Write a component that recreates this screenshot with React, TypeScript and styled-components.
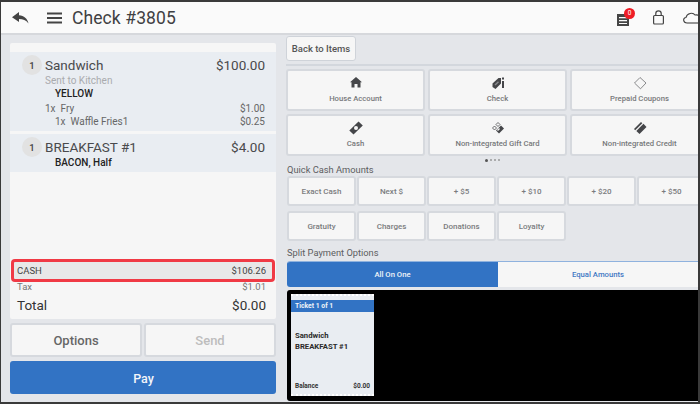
import React from "react";
import styled, { createGlobalStyle } from "styled-components";

const Global = createGlobalStyle`
  html, body { margin: 0; padding: 0; background: #fff; }
  * { box-sizing: border-box; }
  body { font-family: Roboto, "Liberation Sans", sans-serif; }
`;

const Frame = styled.div`
  width: 700px; height: 404px; overflow: hidden;
  border: 2px solid #3a3a3a; border-left-width: 1px;
  background: #e4e6ea; display: flex; flex-direction: column;
`;
const Header = styled.header`
  height: 33px; flex: none; background: #fafafa; border-bottom: 2px solid #d6d8dc;
  display: flex; align-items: center; padding-left: 10px; color: #444;
`;
const HeaderIcon = styled.svg<{ $ml?: number }>`
  flex: none; margin-left: ${p => p.$ml ?? 0}px; display: block;
`;
const Title = styled.h1`
  margin: 0 0 0 10px; font-size: 17.5px; font-weight: 400; color: #3f4042; letter-spacing: .1px;
`;
const HeaderRight = styled.div`
  margin-left: auto; margin-right: -3px; display: flex; align-items: center;
`;
const BadgeWrap = styled.div`
  position: relative; width: 12px; height: 12px; margin: 5px 23px 0 0;
`;
const Badge = styled.span`
  position: absolute; left: 7px; top: -6px; width: 11px; height: 11px; border-radius: 50%;
  background: #ee1c25; color: #fff; font-size: 6.5px; line-height: 11px; text-align: center;
`;
const Main = styled.main`
  flex: 1; display: flex; min-height: 0; padding: 8px 0 0 9px;
`;
const LeftCol = styled.section`
  width: 266px; flex: none; display: flex; flex-direction: column;
`;
const Ticket = styled.div`
  height: 276px; background: #f6f6f6; border-radius: 2px; padding-top: 9px; display: flex; flex-direction: column;
`;
const ItemCard = styled.div<{ $h: number }>`
  height: ${p => p.$h}px; background: #e9edf2; margin-bottom: 3px; padding: 4px 11px 0 12px;
  display: grid; grid-template-columns: 23px 1fr auto; align-content: start;
`;
const Qty = styled.span`
  width: 20px; height: 20px; margin: -1px 0; border-radius: 50%; background: #e2e2e2; color: #444;
  font-size: 9.5px; font-weight: 500; display: flex; align-items: center; justify-content: center;
`;
const ItemName = styled.span`
  font-size: 13.5px; color: #4a4a4c; line-height: 18px;
`;
const ItemPrice = styled.span`
  font-size: 13.5px; color: #4a4a4c; line-height: 18px; text-align: right;
`;
const SubLine = styled.div<{ $indent?: number; $color?: string; $w?: number; $mt?: number }>`
  grid-column: 2 / 4; display: flex; justify-content: space-between;
  padding-left: ${p => p.$indent ?? 0}px; margin-top: ${p => p.$mt ?? 0}px; font-size: 10px; line-height: 13px;
  color: ${p => p.$color ?? "#666"}; font-weight: ${p => p.$w ?? 400};
`;
const Spacer = styled.div` flex: 1; `;
const CashRow = styled.div`
  margin: 0 1px; height: 23px; background: #e8e8e8; border: 3px solid #f03a45; border-radius: 4px;
  display: flex; justify-content: space-between; align-items: center; padding: 0 6px 0 3px;
  font-size: 9.5px; color: #444;
`;
const TaxRow = styled.div`
  display: flex; justify-content: space-between; padding: 0 10px 0 7px; font-size: 9.5px;
  line-height: 12px; margin-top: -1px; color: #777;
`;
const TotalRow = styled.div`
  display: flex; justify-content: space-between; align-items: center; padding: 0 10px 0 7px;
  font-size: 13.5px; height: 24px; margin-bottom: 2px; color: #333;
`;
const ActionRow = styled.div`
  display: grid; grid-template-columns: 132px 132px; gap: 2px; margin-top: 4px;
`;
const ActionButton = styled.button<{ $muted?: boolean }>`
  height: 34px; background: #f6f6f6; border: 2px solid #d6d9de; border-radius: 3px;
  font: 500 13px Roboto, sans-serif; color: ${p => p.$muted ? "#bdbdbd" : "#666"}; padding: 0;
`;
const PayButton = styled.button`
  height: 33px; margin-top: 4px; background: #3273c4; border: 0; border-radius: 3px; color: #f4f6fa;
  font: 500 12.5px Roboto, sans-serif; padding: 1px 0 0 1px;
`;
const RightCol = styled.section`
  margin-left: 10px; margin-top: -7px; flex: 1; min-width: 0; overflow: hidden;
  display: flex; flex-direction: column; align-items: flex-start;
`;
const BackButton = styled.button`
  width: 70px; height: 25px; margin: 0; background: #f6f6f6; border: 1px solid #cfd3d9; border-radius: 3px;
  font: 500 9.5px Roboto, sans-serif; color: #555; padding: 0; flex: none;
`;
const Divider = styled.div`
  width: 100%; height: 2px; flex: none; background: #d3d7dd; margin-top: 3px;
`;
const TileGrid = styled.div`
  margin-top: 3px; display: grid; grid-template-columns: 139px 139px 139px; grid-auto-rows: 42px; gap: 3px;
  flex: none; width: 423px;
`;
const Tile = styled.button`
  background: #f6f6f6; border: 2px solid #d6d9de; border-radius: 3px; padding: 5px 0 0;
  display: flex; flex-direction: column; align-items: center; gap: 4px;
  font: 500 7.7px Roboto, sans-serif; color: #77787a;
`;
const Dots = styled.div`
  width: 412px; height: 8px; display: flex; justify-content: center; align-items: center; gap: 2px; flex: none;
`;
const Dot = styled.span<{ $on?: boolean }>`
  width: ${p => p.$on ? 3 : 2}px; height: ${p => p.$on ? 3 : 2}px; border-radius: 50%;
  background: ${p => p.$on ? "#555" : "#999"};
`;
const SectionLabel = styled.div<{ $mt?: number }>`
  font-size: 9.3px; line-height: 12px; color: #5c5d60; margin-top: ${p => p.$mt ?? 0}px; padding-left: 1px; flex: none;
`;
const QuickGrid = styled.div<{ $mt?: number }>`
  margin-top: ${p => p.$mt ?? 0}px; margin-left: 1px; display: grid; grid-template-columns: repeat(6, 69px);
  grid-auto-rows: 30px; gap: 1px; flex: none; width: 420px;
`;
const QuickButton = styled.button`
  background: #f6f6f6; border: 2px solid #d6d9de; border-radius: 3px; padding: 0;
  font: 500 8px Roboto, sans-serif; color: #7b7c7e;
`;
const Segment = styled.div`
  margin-top: 2px; margin-left: 1px; width: 411px; height: 26px; display: flex; flex: none;
  border-top: 1px solid #8fb2de; border-radius: 3px 0 0 3px; overflow: hidden;
`;
const SegmentOption = styled.div<{ $active?: boolean }>`
  width: ${p => p.$active ? 211 : 200}px; flex: none; display: flex; align-items: center; justify-content: center;
  font-size: 7.7px; font-weight: 500; background: ${p => p.$active ? "#3273c4" : "#f6f6f6"};
  color: ${p => p.$active ? "#f0f3f8" : "#3f78c4"};
`;
const Tray = styled.div`
  margin-top: 3px; margin-left: 1px; width: 411px; height: 111px; flex: none; background: #000;
  border-radius: 3px 0 0 3px; padding: 4px;
`;
const TicketCard = styled.div`
  width: 83px; height: 102px; background: #e9edf2; color: #222;
  border-top: 2px dotted #fff; border-bottom: 2px dotted #fff;
  display: flex; flex-direction: column; padding-top: 4px;
`;
const TicketHead = styled.div`
  height: 12px; background: #3273c4; color: #f0f3f8; font-size: 6.8px; font-weight: 700; line-height: 12px; padding-left: 4px;
`;
const TicketItems = styled.div`
  margin-top: 18px; padding-left: 4px; font-size: 7.7px; font-weight: 700; line-height: 11px; color: #2a2a2a;
`;
const TicketFoot = styled.div`
  margin-top: auto; margin-bottom: 4px; display: flex; justify-content: space-between; padding: 0 4px;
  font-size: 6.5px; font-weight: 700; color: #333;
`;

const ic = "#454649";
const icons: Record<string, React.ReactNode> = {
  house: <path d="M7 1 L1 6.2 L2.5 6.2 L2.5 11.5 L5.5 11.5 L5.5 8 L8.5 8 L8.5 11.5 L11.5 11.5 L11.5 6.2 L13 6.2 Z" fill={ic} />,
  check: <g fill={ic}><path d="M7.5 2 L1.5 7.5 L1.5 11 L4.5 13 L10 7.5 L10 2 Z" /><rect x="11" y="5" width="2" height="7" /><rect x="11" y="1.5" width="2" height="2" /><path d="M3.5 8.5 L7 5.2 L8 6.2 L4.5 9.5 Z" fill="#8a8b8e" /></g>,
  coupon: <path d="M7 1.5 L13 7 L7.5 12.8 L1.5 7 Z" fill="none" stroke="#6c6d70" strokeWidth=".8" />,
  cash: <g><path d="M9.5 0.5 L13.8 4.5 L4.5 13.5 L0.3 9.5 Z" fill={ic} /><circle cx="7" cy="7" r="2" fill="#f6f6f6" /></g>,
  gift: <g fill={ic}><path d="M7 1.5 L9 3.5 L7 5.5 L5 3.5 Z" fill="none" stroke={ic} strokeWidth=".8" /><path d="M3.5 5 L5.5 7 L3.5 9 L1.5 7 Z" fill="none" stroke={ic} strokeWidth=".8" /><path d="M10 4.5 L13 7.5 L8 12.5 L5 9.5 Z" /><path d="M8 7 L9 8 L7 10 L6 9 Z" fill="#f6f6f6" /></g>,
  credit: <g fill={ic}><path d="M8 1 L9.3 2.2 L2.2 9.3 L1 8 Z" /><path d="M10.5 2.8 L13.5 6 L6.5 13 L3.3 10 Z" /></g>,
};

const tiles = [
  ["House Account", "house"], ["Check", "check"], ["Prepaid Coupons", "coupon"],
  ["Cash", "cash"], ["Non-integrated Gift Card", "gift"], ["Non-integrated Credit", "credit"],
];
const quick = ["Exact Cash", "Next $", "+ $5", "+ $10", "+ $20", "+ $50"];
const extras = ["Gratuity", "Charges", "Donations", "Loyalty"];

export default function App() {
  return (
    <Frame>
      <Global />
      <Header>
        <HeaderIcon width="18" height="14" viewBox="0 0 18 14">
          <path d="M8 1 L1 6.2 L8 11 L8 8 C12 8 15 9 17.5 12.5 C16.5 7.5 13 4.5 8 4.2 Z" fill="#444" />
        </HeaderIcon>
        <HeaderIcon width="15" height="12" viewBox="0 0 15 12" $ml={18}>
          <g fill="#444"><rect y="0.5" width="15" height="2" /><rect y="5" width="15" height="2" /><rect y="9.5" width="15" height="2" /></g>
        </HeaderIcon>
        <Title>Check #3805</Title>
        <HeaderRight>
          <BadgeWrap>
            <HeaderIcon width="12" height="12" viewBox="0 0 12 12">
              <path d="M0 0 H12 V12 H0 Z M2 3 V4.3 H10 V3 Z M2 6 V7.3 H10 V6 Z M2 9 V10 H10 V9 Z" fill="#454545" fillRule="evenodd" />
            </HeaderIcon>
            <Badge>0</Badge>
          </BadgeWrap>
          <HeaderIcon width="13" height="15" viewBox="0 0 13 15" fill="none" stroke="#444" strokeWidth="1.2">
            <rect x="1.6" y="5.5" width="9.8" height="8.5" rx="1" />
            <path d="M3.8 5.5 V3.5 a2.7 2.7 0 0 1 5.4 0 V5.5" />
          </HeaderIcon>
          <HeaderIcon width="19" height="14" viewBox="0 0 19 14" $ml={17} fill="none" stroke="#444" strokeWidth="1.1">
            <path d="M5 12 C1 12 0.5 7 4 6.5 C5 2 11 1 13 4 C16 3.5 19 5 19 8" />
            <path d="M5 12 H19" />
          </HeaderIcon>
        </HeaderRight>
      </Header>
      <Main>
        <LeftCol>
          <Ticket>
            <ItemCard $h={79}>
              <Qty>1</Qty><ItemName>Sandwich</ItemName><ItemPrice>$100.00</ItemPrice>
              <SubLine $color="#a9abae">Sent to Kitchen</SubLine>
              <SubLine $indent={10} $color="#222" $w={500}>YELLOW</SubLine>
              <SubLine $mt={2}><span>1x&nbsp; Fry</span><span>$1.00</span></SubLine>
              <SubLine $indent={10}><span>1x&nbsp; Waffle Fries1</span><span>$0.25</span></SubLine>
            </ItemCard>
            <ItemCard $h={38}>
              <Qty>1</Qty><ItemName>BREAKFAST #1</ItemName><ItemPrice>$4.00</ItemPrice>
              <SubLine $indent={10} $color="#222" $w={500}>BACON, Half</SubLine>
            </ItemCard>
            <Spacer />
            <CashRow><span>CASH</span><span>$106.26</span></CashRow>
            <TaxRow><span>Tax</span><span>$1.01</span></TaxRow>
            <TotalRow><span>Total</span><span>$0.00</span></TotalRow>
          </Ticket>
          <ActionRow>
            <ActionButton>Options</ActionButton>
            <ActionButton $muted>Send</ActionButton>
          </ActionRow>
          <PayButton>Pay</PayButton>
        </LeftCol>
        <RightCol>
          <BackButton>Back to Items</BackButton>
          <Divider />
          <TileGrid>
            {tiles.map(([label, icon]) => (
              <Tile key={label}>
                <svg width="14" height="14" viewBox="0 0 14 14">{icons[icon]}</svg>
                {label}
              </Tile>
            ))}
          </TileGrid>
          <Dots><Dot $on /><Dot /><Dot /><Dot /></Dots>
          <SectionLabel>Quick Cash Amounts</SectionLabel>
          <QuickGrid>{quick.map(q => <QuickButton key={q}>{q}</QuickButton>)}</QuickGrid>
          <QuickGrid $mt={5}>{extras.map(q => <QuickButton key={q}>{q}</QuickButton>)}</QuickGrid>
          <SectionLabel $mt={6}>Split Payment Options</SectionLabel>
          <Segment>
            <SegmentOption $active>All On One</SegmentOption>
            <SegmentOption>Equal Amounts</SegmentOption>
          </Segment>
          <Tray>
            <TicketCard>
              <TicketHead>Ticket 1 of 1</TicketHead>
              <TicketItems>Sandwich<br />BREAKFAST #1</TicketItems>
              <TicketFoot><span>Balance</span><span>$0.00</span></TicketFoot>
            </TicketCard>
          </Tray>
        </RightCol>
      </Main>
    </Frame>
  );
}
